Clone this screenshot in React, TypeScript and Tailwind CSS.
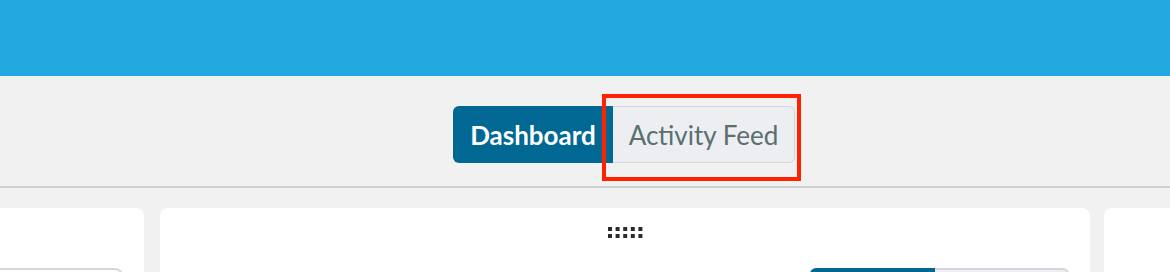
import React from "react";

function Dots() {
  const xs = [0, 7.6, 15.2, 22.8, 30.4];
  return (
    <svg width="35" height="11" viewBox="0 0 35 11" className="block">
      {xs.map((x) => (
        <React.Fragment key={x}>
          <rect x={x} y={0} width={4} height={4} fill="#2b2b2b" />
          <rect x={x} y={7} width={4} height={4} fill="#2b2b2b" />
        </React.Fragment>
      ))}
    </svg>
  );
}

export default function App() {
  return (
    <div className="w-[1170px] h-[272px] overflow-hidden bg-[#f1f1f1] font-['Lato','Noto_Sans',sans-serif]">
      <div className="h-[76px] bg-[#24a8e0]" />
      <div className="relative h-[110px] flex justify-center items-start pt-[30px] pl-[78px]">
        <div className="flex">
          <button className="h-[57px] w-[160px] rounded-l-[6px] bg-[#006892] text-white text-[26px] font-bold leading-none">
            Dashboard
          </button>
          <button className="h-[57px] w-[182px] rounded-r-[6px] bg-[#eceef1] border-[1.5px] border-l-0 border-[#d3d7db] text-[#5b6f6f] text-[26px] leading-none">
            Activity Feed
          </button>
        </div>
        <div className="absolute left-[602px] top-[18px] w-[199px] h-[87px] border-[4px] border-[#ff2200] pointer-events-none" />
      </div>
      <div className="h-[2px] bg-[#ccd0d3]" />
      <div className="flex items-start pt-[20px] ml-[-56px]">
        <div className="w-[200px] h-[120px] shrink-0 bg-white rounded-[8px] pt-[60px] pr-[21px]">
          <div className="h-[40px] rounded-[8px] border-2 border-[#d3d7db] bg-white" />
        </div>
        <div className="ml-[16px] w-[930px] h-[120px] shrink-0 bg-white rounded-[8px] flex flex-col items-center pt-[19px]">
          <Dots />
          <div className="self-end mr-[21px] mt-[30px] flex h-[40px]">
            <div className="w-[125px] bg-[#006892] rounded-l-[6px]" />
            <div className="w-[134px] bg-[#eceef1] border-2 border-l-0 border-[#d3d7db] rounded-r-[6px]" />
          </div>
        </div>
        <div className="ml-[14px] w-[200px] h-[120px] shrink-0 bg-white rounded-[8px]" />
      </div>
    </div>
  );
}
